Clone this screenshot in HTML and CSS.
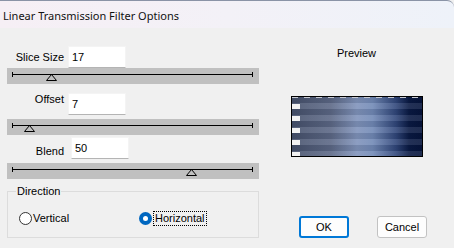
FILE: index.html
```html
<!DOCTYPE html>
<html lang="en">
<head>
  <meta charset="UTF-8" />
  <title>Linear Transmission Filter Options</title>
  <link rel="stylesheet" href="styles.css">
</head>
<body>
<div class="window">
  <div class="titlebar">Linear Transmission Filter Options</div>

  <div class="content">
    <div class="left">
      <div class="field field-slice">
        <label for="slice">Slice Size</label>
        <input type="text" id="slice" value="17" />
      </div>
      <div class="slider">
        <div class="track"></div>
        <svg class="thumb" style="left: 39px" width="11" height="7" viewBox="0 0 11 7"><polygon points="0.5,6.5 5.5,0.5 10.5,6.5" fill="none" stroke="#000" /></svg>
      </div>

      <div class="field field-offset">
        <label for="offset">Offset</label>
        <input type="text" id="offset" value="7" />
      </div>
      <div class="slider">
        <div class="track"></div>
        <svg class="thumb" style="left: 17px" width="11" height="7" viewBox="0 0 11 7"><polygon points="0.5,6.5 5.5,0.5 10.5,6.5" fill="none" stroke="#000" /></svg>
      </div>

      <div class="field field-blend">
        <label for="blend">Blend</label>
        <input type="text" id="blend" value="50" />
      </div>
      <div class="slider">
        <div class="track"></div>
        <svg class="thumb" style="left: 179px" width="11" height="7" viewBox="0 0 11 7"><polygon points="0.5,6.5 5.5,0.5 10.5,6.5" fill="none" stroke="#000" /></svg>
      </div>

      <fieldset class="direction">
        <legend>Direction</legend>
        <div class="radios">
          <span class="radio radio-vertical">
            <svg width="13" height="13" viewBox="0 0 13 13"><circle cx="6.5" cy="6.5" r="6" fill="#fff" stroke="#333" /></svg>
            <span class="radio-text">Vertical</span>
          </span>
          <span class="radio radio-horizontal">
            <svg width="13" height="13" viewBox="0 0 13 13"><circle cx="6.5" cy="6.5" r="6.5" fill="#0067c0" /><circle cx="6.5" cy="6.5" r="2.5" fill="#fff" /></svg>
            <span class="radio-text focus">Horizontal</span>
          </span>
        </div>
      </fieldset>
    </div>

    <div class="right">
      <div class="preview-label">Preview</div>
      <div class="preview"></div>
      <div class="buttons">
        <button class="btn btn-default">OK</button>
        <button class="btn">Cancel</button>
      </div>
    </div>
  </div>
</div>
</body>
</html>
```

FILE: styles.css
```css
/* base */
* {
  box-sizing: border-box;
}
html, body {
  margin: 0;
  padding: 0;
}
body {
  width: 454px;
  height: 248px;
  overflow: hidden;
  background: #f0f0f0;
  font-family: 'Liberation Sans', Arial, sans-serif;
  font-size: 11px;
  line-height: 13px;
  color: #000;
}

.titlebar {
  height: 28px;
  padding: 8px 0 0 3px;
  border-top: 1px solid #8a93a6;
  border-top-right-radius: 7px;
  background: linear-gradient(90deg, #f6eff5 0%, #f3f1f7 50%, #eef2f9 100%);
  font-family: 'Noto Sans', sans-serif;
  font-size: 11px;
  line-height: 14px;
  color: #111;
}

.content {
  display: flex;
}

/* left column */
.left {
  width: 252px;
  margin-left: 7px;
  padding-top: 18px;
}

.field {
  display: flex;
  align-items: flex-start;
}
.field label {
  width: 57px;
  text-align: right;
}
.field input {
  width: 58px;
  height: 22px;
  margin-left: 4px;
  padding: 3px 3px;
  border: 1px solid #f4f4f4;
  border-bottom-color: #b4b4b4;
  background: #fff;
  font-family: inherit;
  font-size: 11px;
  line-height: 13px;
  color: #000;
  outline: none;
}
.field-slice label {
  padding-top: 5px;
}
.field-offset {
  margin-top: 9px;
}
.field-offset label {
  padding-top: 0;
}
.field-blend {
  margin-top: 2px;
}
.field-blend label {
  padding-top: 8px;
}
.field-blend input {
  margin-left: 7px;
}

.slider {
  position: relative;
  height: 16px;
  background: #c0c0c0;
}
.field-offset + .slider,
.field-blend + .slider {
  margin-top: 4px;
}
.track {
  position: relative;
  top: 6px;
  height: 1px;
  margin: 0 6px 0 5px;
  background: #000;
}
.track::before,
.track::after {
  content: '';
  position: absolute;
  top: -2px;
  width: 1px;
  height: 5px;
  background: #000;
}
.track::before {
  left: 0;
}
.track::after {
  right: 0;
}
.thumb {
  position: absolute;
  top: 6px;
  display: block;
}

/* direction group */
.direction {
  margin: 6px 0 0;
  padding: 0 0 12px;
  border: 1px solid #dcdcdc;
}
.direction legend {
  margin-left: 8px;
  padding: 0 1px;
}
.radios {
  display: flex;
  padding-top: 14px;
}
.radio {
  display: flex;
  align-items: center;
}
.radio svg {
  display: block;
}
.radio-vertical {
  margin-left: 11px;
  width: 120px;
}
.radio-text {
  margin-left: 1px;
}
.focus {
  margin-left: 2px;
  padding: 0 1px;
  outline: 1px dotted #000;
}

/* right column */
.right {
  flex: 1;
  display: flex;
  flex-direction: column;
  align-items: center;
}
.preview-label {
  margin-top: 19px;
}
.preview {
  width: 132px;
  height: 61px;
  margin-top: 36px;
  border: 1px solid #000;
  background:
    repeating-linear-gradient(90deg, #c6c9d2 0 6px, transparent 6px 12px) top left / 100% 1px no-repeat,
    repeating-linear-gradient(180deg, transparent 0 7px, #f2f2f2 7px 12px) left top / 8px 100% no-repeat,
    repeating-linear-gradient(180deg, rgba(0, 0, 0, 0.08) 0 6px, rgba(255, 255, 255, 0.1) 6px 12px),
    linear-gradient(90deg, #46516c 0%, #5c6886 30%, #8093bb 50%, #7189b6 62%, #30467a 80%, #0a1a44 90%, #06143c 100%);
}

.buttons {
  display: flex;
  align-self: flex-start;
  gap: 28px;
  margin: 59px 0 0 40px;
}
.btn {
  width: 50px;
  height: 22px;
  padding: 0;
  border: 1px solid #c2c2c2;
  border-radius: 3px;
  background: #fdfdfd;
  font-family: inherit;
  font-size: 11px;
  color: #000;
}
.btn-default {
  border: 2px solid #0078d7;
}
```
